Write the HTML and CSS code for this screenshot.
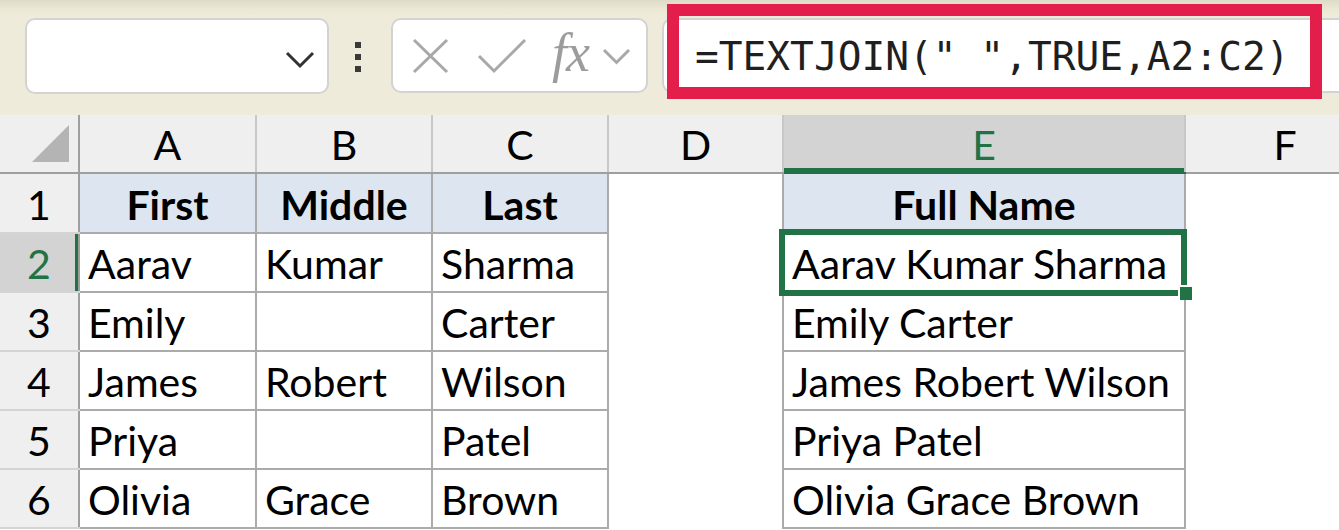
FILE: index.html
```html
<!DOCTYPE html>
<html>
<head>
    <meta charset="utf-8">
    <title>TEXTJOIN</title>
    <link rel="stylesheet" href="styles.css">
</head>
<body>
<div class="toolbar">
    <div class="namebox">
        <svg class="chev" width="30" height="18" viewBox="0 0 30 18"><path d="M2 2 L15 15 L28 2" fill="none" stroke="#333" stroke-width="3"/></svg>
    </div>
    <div class="grip"><i></i><i></i><i></i></div>
    <div class="fxbox">
        <svg class="ico-x" width="37" height="36" viewBox="0 0 37 36"><path d="M2 2 L35 34 M35 2 L2 34" fill="none" stroke="#a8a8a8" stroke-width="3"/></svg>
        <svg class="ico-ok" width="50" height="36" viewBox="0 0 50 36"><path d="M2 18 L17 33 L48 2" fill="none" stroke="#a8a8a8" stroke-width="3"/></svg>
        <span class="fx">fx</span>
        <svg class="ico-dd" width="29" height="17" viewBox="0 0 29 17"><path d="M2 2 L14.5 14.5 L27 2" fill="none" stroke="#a8a8a8" stroke-width="3"/></svg>
    </div>
    <div class="formula">
        <span class="formula-text">=TEXTJOIN(" ",TRUE,A2:C2)</span>
        <div class="highlight"></div>
    </div>
</div>

<table class="sheet">
    <colgroup>
        <col style="width:79px">
        <col style="width:177px">
        <col style="width:176px">
        <col style="width:176px">
        <col style="width:175px">
        <col style="width:402px">
        <col style="width:200px">
    </colgroup>
    <thead>
    <tr>
        <th class="corner"><div class="tri"></div></th>
        <th>A</th>
        <th>B</th>
        <th>C</th>
        <th>D</th>
        <th class="sel">E</th>
        <th>F</th>
    </tr>
    </thead>
    <tbody>
    <tr class="title">
        <td class="rh">1</td>
        <td class="b">First</td>
        <td class="b">Middle</td>
        <td class="b">Last</td>
        <td></td>
        <td class="b">Full Name</td>
        <td></td>
    </tr>
    <tr>
        <td class="rh sel">2</td>
        <td class="b">Aarav</td>
        <td class="b">Kumar</td>
        <td class="b">Sharma</td>
        <td></td>
        <td class="b active">Aarav Kumar Sharma</td>
        <td></td>
    </tr>
    <tr>
        <td class="rh">3</td>
        <td class="b">Emily</td>
        <td class="b"></td>
        <td class="b">Carter</td>
        <td></td>
        <td class="b">Emily Carter</td>
        <td></td>
    </tr>
    <tr>
        <td class="rh">4</td>
        <td class="b">James</td>
        <td class="b">Robert</td>
        <td class="b">Wilson</td>
        <td></td>
        <td class="b">James Robert Wilson</td>
        <td></td>
    </tr>
    <tr>
        <td class="rh">5</td>
        <td class="b">Priya</td>
        <td class="b"></td>
        <td class="b">Patel</td>
        <td></td>
        <td class="b">Priya Patel</td>
        <td></td>
    </tr>
    <tr>
        <td class="rh">6</td>
        <td class="b">Olivia</td>
        <td class="b">Grace</td>
        <td class="b">Brown</td>
        <td></td>
        <td class="b">Olivia Grace Brown</td>
        <td></td>
    </tr>
    </tbody>
</table>
</body>
</html>
```

FILE: styles.css
```css
body {
    margin: 0;
    background-color: #fff;
    font-family: Lato, "Open Sans", sans-serif;
    overflow: hidden;
}

/* formula bar strip */

.toolbar {
    height: 115px;
    box-sizing: border-box;
    padding: 18px 0 0 25px;
    display: flex;
    align-items: flex-start;
    background: linear-gradient(to bottom, #dedbc8 0, #ebe8d6 10px, #eeebda 16px);
}

.namebox {
    width: 304px;
    height: 76px;
    box-sizing: border-box;
    border: 2px solid #d3d3d3;
    border-radius: 10px;
    background-color: #fff;
    display: flex;
    justify-content: flex-end;
    align-items: center;
    padding: 8px 12px 0 0;
}

.grip {
    width: 7px;
    margin: 24px 29px 0 26px;
    display: flex;
    flex-direction: column;
    gap: 6px;
}

.grip i {
    display: block;
    width: 6px;
    height: 6px;
    background-color: #3a3a3a;
}

.fxbox {
    width: 257px;
    height: 75px;
    box-sizing: border-box;
    border: 2px solid #d3d3d3;
    border-radius: 10px;
    background-color: #fff;
    display: flex;
    align-items: center;
    padding-left: 19px;
}

.ico-x {
    margin-right: 28px;
}

.ico-ok {
    margin-right: 25px;
}

.fx {
    font-family: "Liberation Serif", serif;
    font-style: italic;
    font-size: 54px;
    line-height: 1;
    color: #9c9c9c;
    margin: 0 13px 6px 0;
    letter-spacing: -1px;
}

.ico-dd {
    margin-top: 2px;
}

.formula {
    position: relative;
    flex: 1;
    height: 75px;
    margin: 0 -20px 0 14px;
    box-sizing: border-box;
    border: 2px solid #d3d3d3;
    border-radius: 10px;
    background-color: #fff;
    display: flex;
    align-items: center;
    padding-left: 31px;
}

.formula-text {
    font-family: "DejaVu Sans Mono", monospace;
    font-size: 39.5px;
    color: #1f1f1f;
    white-space: pre;
    margin-top: 0;
}

.highlight {
    position: absolute;
    left: 3px;
    top: -16px;
    width: 655px;
    height: 95px;
    box-sizing: border-box;
    border: 12px solid #e31e4a;
}

/* sheet grid */

.sheet {
    table-layout: fixed;
    border-collapse: collapse;
    width: 1385px;
    font-size: 41px;
    color: #000;
}

.sheet th {
    height: 55px;
    padding: 2px 0 0;
    font-weight: normal;
    background-color: #efefef;
    border-right: 2px solid #c8c8c8;
    border-bottom: 2px solid #9f9f9f;
    text-align: center;
    vertical-align: middle;
}

.sheet th.sel {
    background-color: #d3d3d3;
    color: #217346;
    border-bottom-color: #217346;
    box-shadow: inset 0 -4px 0 #217346;
}

.sheet th.corner {
    border-right-color: #9f9f9f;
    padding: 0;
}

.tri {
    width: 37px;
    height: 37px;
    margin: 0 9px 0 auto;
    background-color: #b4b4b4;
    clip-path: polygon(100% 0, 100% 100%, 0 100%);
}

.sheet td {
    height: 55px;
    padding: 2px 8px 0;
    white-space: nowrap;
    overflow: visible;
    vertical-align: middle;
}

.sheet .title td {
    height: 56px;
}

.sheet td.rh {
    padding: 2px 0 0;
    text-align: center;
    background-color: #efefef;
    border-right: 2px solid #9f9f9f;
    border-bottom: 2px solid #d4d4d4;
}

.sheet td.rh.sel {
    background-color: #d3d3d3;
    color: #217346;
    box-shadow: inset -3px 0 0 #217346;
}

.sheet td.b {
    border: 2px solid #ababab;
}

.title td.b {
    background-color: #dde6f0;
    font-weight: bold;
    text-align: center;
}

.sheet td.active {
    position: relative;
}

.sheet td.active::after {
    content: '';
    position: absolute;
    left: -5px;
    top: -5px;
    right: -3px;
    bottom: -5px;
    border: 6px solid #217346;
}

.sheet td.active::before {
    content: '';
    position: absolute;
    right: -8px;
    bottom: -9px;
    width: 12px;
    height: 13px;
    background-color: #217346;
    border-left: 2px solid #fff;
    border-top: 2px solid #fff;
    z-index: 1;
}
```
